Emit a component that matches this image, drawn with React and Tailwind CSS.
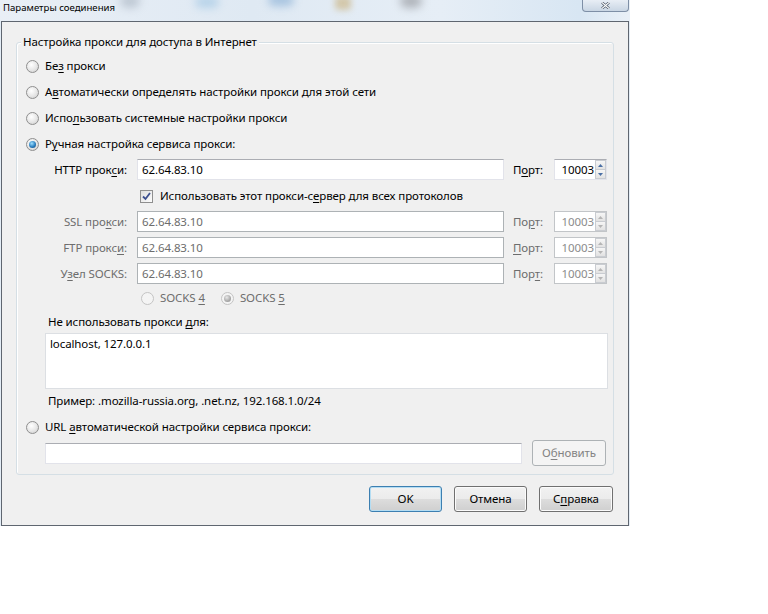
import React from 'react';

const U = ({ children }) => <span className="underline underline-offset-[2px]">{children}</span>;

const Radio = ({ checked, disabled }) => (
  <span
    className={`flex h-[13px] w-[13px] shrink-0 items-center justify-center rounded-full border ${
      disabled ? 'border-[#c4c4c4] bg-[#f4f4f4]' : 'border-[#8f8f8f] bg-[radial-gradient(circle_at_40%_35%,#ffffff,#e6e6e6_55%,#c9c9c9)]'
    }`}
  >
    {checked && (
      <span
        className={`h-[7px] w-[7px] rounded-full ${
          disabled
            ? 'bg-[radial-gradient(circle_at_40%_35%,#e8e8e8,#a9a9a9_60%,#8a8a8a)]'
            : 'bg-[radial-gradient(circle_at_40%_35%,#9fe0ff,#2a7fc0_55%,#0f3f70)]'
        }`}
      />
    )}
  </span>
);

const Checkbox = () => (
  <span className="flex h-[13px] w-[13px] shrink-0 items-center justify-center border border-[#8f8f8f] bg-gradient-to-br from-[#dedede] to-[#fdfdfd]">
    <svg width="9" height="9" viewBox="0 0 9 9">
      <path d="M1 4.5 L3.5 7 L8 1" fill="none" stroke="#3c4f8f" strokeWidth="1.8" />
    </svg>
  </span>
);

const Spin = ({ disabled }) => {
  const arrow = disabled ? '#b5b5b5' : '#4a6fa5';
  return (
    <div
      className={`flex h-[21px] w-[53px] items-stretch border bg-white ${
        disabled ? 'border-[#c2c5c8] text-[#8c8c8c]' : 'border-[#e2e3ea] border-t-[#abadb3] text-black'
      }`}
    >
      <div className="flex flex-1 items-center justify-end pr-[1px]">10003</div>
      <div className="flex w-[11px] flex-col">
        <div className="flex flex-1 items-center justify-center border border-[#c9ccd1] bg-gradient-to-b from-[#f6f6f6] to-[#e2e2e2]">
          <svg width="5" height="3" viewBox="0 0 5 3">
            <path d="M0 3 L2.5 0 L5 3 Z" fill={arrow} />
          </svg>
        </div>
        <div className="flex flex-1 items-center justify-center border border-t-0 border-[#c9ccd1] bg-gradient-to-b from-[#f6f6f6] to-[#e2e2e2]">
          <svg width="5" height="3" viewBox="0 0 5 3">
            <path d="M0 0 L2.5 3 L5 0 Z" fill={arrow} />
          </svg>
        </div>
      </div>
    </div>
  );
};

const ProxyRow = ({ label, port, disabled, className = '' }) => (
  <div className={`flex h-[21px] items-center ${className}`}>
    <div className={`w-[110px] text-right ${disabled ? 'text-[#6d6d6d]' : 'text-black'}`}>{label}</div>
    <div
      className={`ml-[10px] flex h-[21px] w-[367px] items-center border bg-white pl-[4px] ${
        disabled ? 'border-[#adb2b5] text-[#6d6d6d]' : 'border-[#e2e3ea] border-t-[#abadb3] text-black'
      }`}
    >
      62.64.83.10
    </div>
    <div className={`ml-[9px] w-[41px] ${disabled ? 'text-[#6d6d6d]' : 'text-black'}`}>{port}</div>
    <Spin disabled={disabled} />
  </div>
);

const Button = ({ children, primary, disabled, className = '' }) => (
  <div
    className={`flex h-[26px] items-center justify-center rounded-[3px] border ${
      primary
        ? 'border-[#3c7fb1] shadow-[inset_0_0_0_1px_#b4ddf3]'
        : disabled
        ? 'border-[#adb2b5] text-[#838383]'
        : 'border-[#707070] shadow-[inset_0_0_0_1px_#fbfbfb]'
    } ${
      disabled
        ? 'bg-[#f4f4f4]'
        : 'bg-[linear-gradient(#f2f2f2,#ebebeb_50%,#dddddd_50%,#cfcfcf)]'
    } ${className}`}
  >
    {children}
  </div>
);

export default function App() {
  return (
    <div
      className="relative h-[614px] w-[768px] overflow-hidden bg-white text-[11.5px] leading-[16px] tracking-[-0.1px] text-black"
      style={{ fontFamily: '"Noto Sans", "Open Sans", sans-serif' }}
    >
      <div className="w-[630px] bg-[#e4edf6]">
        {/* заголовок */}
        <div className="relative h-[21px] overflow-hidden bg-[linear-gradient(90deg,#e9eff6,#dfe9f3_40%,#e6eef6_70%,#d8e6f3_92%,#e9f0f7)]">
          <div className="absolute left-[120px] top-[-6px] h-[14px] w-[20px] rounded-full bg-[#9aa6b4] opacity-50 blur-[4px]" />
          <div className="absolute left-[195px] top-[-4px] h-[12px] w-[24px] rounded-full bg-[#9cc4e2] opacity-60 blur-[4px]" />
          <div className="absolute left-[268px] top-[-6px] h-[12px] w-[26px] rounded-full bg-[#7fa9d2] opacity-60 blur-[4px]" />
          <div className="absolute left-[335px] top-[-4px] h-[14px] w-[16px] rounded-[3px] bg-[#c9b07a] opacity-60 blur-[3px]" />
          <div className="absolute left-[400px] top-[-6px] h-[14px] w-[22px] rounded-full bg-[#8d8f94] opacity-60 blur-[4px]" />
          <div className="absolute left-[3px] top-0 text-[9.6px] tracking-normal text-black">Параметры соединения</div>
          <div className="absolute left-[582px] top-0 flex h-[12px] w-[47px] items-center justify-center rounded-b-[4px] border border-t-0 border-[#7e8fa6] bg-gradient-to-b from-[#e8eef5] to-[#c9d6e4]">
            <svg width="9" height="7" viewBox="0 0 9 7">
              <path d="M1 0.5 L8 6.5 M8 0.5 L1 6.5" stroke="#3f4b5b" strokeWidth="2.4" />
              <path d="M1 0.5 L8 6.5 M8 0.5 L1 6.5" stroke="#ffffff" strokeWidth="1.1" />
            </svg>
          </div>
        </div>

        {/* окно */}
        <div className="ml-[1px] h-[505px] w-[628px] border border-[#5f6670] bg-[#f0f0f0]">
          <div className="mx-[14px] mt-[20px] rounded-[3px] border border-[#d5dfe5] pb-[8px] shadow-[inset_1px_1px_0_#ffffff]">
            <div className="-mt-[9px] ml-[4px] w-fit bg-[#f0f0f0] px-[2px]">Настройка прокси для доступа в Интернет</div>

            <div className="mt-[3px] pl-[9px]">
              <div className="flex h-[26px] items-center gap-[6px]">
                <Radio />
                <span>Бе<U>з</U> прокси</span>
              </div>
              <div className="flex h-[26px] items-center gap-[6px]">
                <Radio />
                <span>А<U>в</U>томатически определять настройки прокси для этой сети</span>
              </div>
              <div className="flex h-[26px] items-center gap-[6px]">
                <Radio />
                <span>Испо<U>л</U>ьзовать системные настройки прокси</span>
              </div>
              <div className="flex h-[26px] items-center gap-[6px]">
                <Radio checked />
                <span>Р<U>у</U>чная настройка сервиса прокси:</span>
              </div>
            </div>

            <ProxyRow className="mt-[2px]" label={<>HTTP прок<U>с</U>и:</>} port={<>П<U>о</U>рт:</>} />

            <div className="ml-[123px] mt-[4px] flex h-[24px] items-center gap-[7px]">
              <Checkbox />
              <span>Использовать этот прокси-с<U>е</U>рвер для всех протоколов</span>
            </div>

            <ProxyRow className="mt-[3px]" disabled label={<>SSL про<U>к</U>си:</>} port={<>По<U>р</U>т:</>} />
            <ProxyRow className="mt-[5px]" disabled label={<>FTP прокс<U>и</U>:</>} port={<><U>П</U>орт:</>} />
            <ProxyRow className="mt-[5px]" disabled label={<>У<U>з</U>ел SOCKS:</>} port={<>Пор<U>т</U>:</>} />

            <div className="ml-[124px] mt-[2px] flex h-[24px] items-center text-[#6d6d6d]">
              <Radio disabled />
              <span className="ml-[6px]">SOCKS <U>4</U></span>
              <span className="ml-[16px]">
                <Radio checked disabled />
              </span>
              <span className="ml-[6px]">SOCKS <U>5</U></span>
            </div>

            <div className="ml-[31px] mt-[4px] h-[16px]">Не использовать прокси <U>д</U>ля:</div>

            <div className="ml-[28px] mt-[3px] h-[56px] w-[563px] border border-[#dcdfe3] bg-white px-[4px] pt-[2px]">
              localhost, 127.0.0.1
            </div>

            <div className="ml-[31px] mt-[4px] h-[16px]">Пример: .mozilla-russia.org, .net.nz, 192.168.1.0/24</div>

            <div className="ml-[9px] mt-[5px] flex h-[26px] items-center gap-[6px]">
              <Radio />
              <span>URL <U>а</U>втоматической настройки сервиса прокси:</span>
            </div>

            <div className="ml-[28px] flex h-[26px] items-center">
              <div className="h-[21px] w-[477px] border border-[#e2e3ea] border-t-[#abadb3] bg-white" />
              <Button disabled className="ml-[10px] w-[74px]">
                <span>О<U>б</U>новить</span>
              </Button>
            </div>
          </div>

          <div className="mr-[15px] mt-[11px] flex justify-end gap-[12px]">
            <Button primary className="w-[73px]">OK</Button>
            <Button className="w-[73px]">Отмена</Button>
            <Button className="w-[74px]">
              <span>С<U>п</U>равка</span>
            </Button>
          </div>
        </div>
      </div>
    </div>
  );
}
